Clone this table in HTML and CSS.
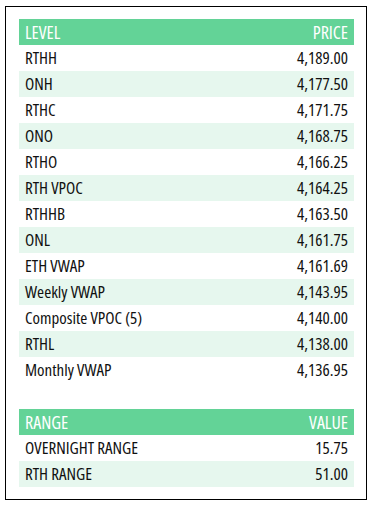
FILE: index.html
```html
<!DOCTYPE html>
<html>
<head>
<meta charset="utf-8">
<link rel="stylesheet" href="styles.css">
</head>
<body>
<div class="card">
  <table class="levels">
    <thead>
      <tr><th class="l">LEVEL</th><th class="r">PRICE</th></tr>
    </thead>
    <tbody>
      <tr><td>RTHH</td><td class="r">4,189.00</td></tr>
      <tr><td>ONH</td><td class="r">4,177.50</td></tr>
      <tr><td>RTHC</td><td class="r">4,171.75</td></tr>
      <tr><td>ONO</td><td class="r">4,168.75</td></tr>
      <tr><td>RTHO</td><td class="r">4,166.25</td></tr>
      <tr><td>RTH VPOC</td><td class="r">4,164.25</td></tr>
      <tr><td>RTHHB</td><td class="r">4,163.50</td></tr>
      <tr><td>ONL</td><td class="r">4,161.75</td></tr>
      <tr><td>ETH VWAP</td><td class="r">4,161.69</td></tr>
      <tr><td>Weekly VWAP</td><td class="r">4,143.95</td></tr>
      <tr><td>Composite VPOC (5)</td><td class="r">4,140.00</td></tr>
      <tr><td>RTHL</td><td class="r">4,138.00</td></tr>
      <tr><td>Monthly VWAP</td><td class="r">4,136.95</td></tr>
    </tbody>
  </table>
  <table class="levels ranges">
    <thead>
      <tr><th class="l">RANGE</th><th class="r">VALUE</th></tr>
    </thead>
    <tbody>
      <tr><td>OVERNIGHT RANGE</td><td class="r">15.75</td></tr>
      <tr><td>RTH RANGE</td><td class="r">51.00</td></tr>
    </tbody>
  </table>
</div>
</body>
</html>
```
FILE: styles.css
```css
html, body {
  margin: 0;
  padding: 0;
  background: #ffffff;
}
body {
  font-family: "Open Sans", "DejaVu Sans Condensed", sans-serif;
  font-stretch: 77%;
  font-size: 17px;
  color: #111111;
}
.card {
  margin: 6px 0 0 5px;
  border: 1px solid #000000;
  padding: 12px 12px 0 13px;
  box-sizing: border-box;
  width: 362px;
  height: 494px;
}
.levels {
  width: 335px;
  border-collapse: collapse;
  border-spacing: 0;
}
.levels th, .levels td {
  height: 26px;
  padding: 0 6px;
  line-height: 26px;
  vertical-align: middle;
}
.levels th {
  background: #63d397;
  color: #ffffff;
  font-weight: normal;
  font-size: 18px;
}
.levels th.l { text-align: left; }
.r { text-align: right; }
.levels tbody tr:nth-child(even) td {
  background: #e6f7ee;
}
.ranges {
  margin-top: 26px;
}
```
